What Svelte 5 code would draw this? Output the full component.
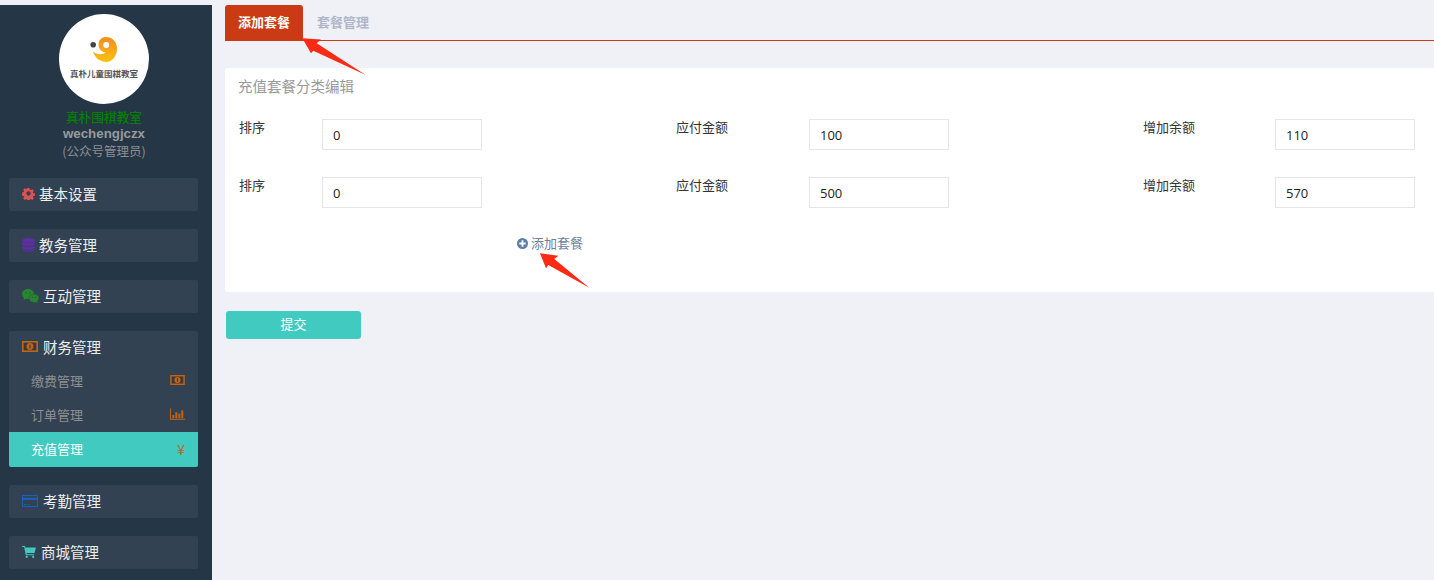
<script>
  const rows = [
    { sort: '0', pay: '100', gain: '110' },
    { sort: '0', pay: '500', gain: '570' }
  ];
</script>

<div class="page">
  <aside class="sidebar">
    <div class="profile">
      <div class="logo">
        <svg class="logo-mark" viewBox="0 0 28 25" width="28" height="25">
          <defs>
            <linearGradient id="smile" x1="0" y1="0" x2="0" y2="1">
              <stop offset="0" stop-color="#f08f1c" />
              <stop offset="1" stop-color="#fcc00f" />
            </linearGradient>
          </defs>
          <circle cx="3.200" cy="7.800" r="2.800" fill="#444" />
          <path d="M3 14.500C5 21.500 11 25 16 25c6.500 0 11-6 11-13.500C27 4.500 22 0 16 0c-4.500 0-7.500 3.300-7.500 7.500S11.500 15.500 16 15.500c-4.500 2.500-9 2.500-13-1z" fill="url(#smile)" />
          <circle cx="16.200" cy="8" r="3" fill="#fff" />
        </svg>
        <span class="logo-text">真朴儿童围棋教室</span>
      </div>
      <div class="school">真朴围棋教室</div>
      <div class="account">wechengjczx</div>
      <div class="role">(公众号管理员)</div>
    </div>

    <nav class="menu">
      <div class="group">
        <div class="head">
          <svg class="ico" viewBox="0 0 14 14" width="13" height="13">
            <path d="M5.600 0h2.800l.4 2 1.400.6 1.700-1.100 2 2-1.100 1.700.6 1.400 2 .4v2.800l-2 .4-.6 1.400 1.100 1.700-2 2-1.700-1.100-1.400.6-.4 2H5.600l-.4-2-1.400-.6-1.700 1.100-2-2 1.100-1.700-.6-1.400-2-.4V5.600l2-.4.6-1.400-1.100-1.700 2-2 1.700 1.100 1.400-.6z" fill="#d9534f" transform="translate(1.200 1.200) scale(.83)" />
            <circle cx="7" cy="7" r="2.300" fill="#324252" />
          </svg>
          基本设置
        </div>
      </div>
      <div class="group">
        <div class="head">
          <svg class="ico" viewBox="0 0 14 15" width="13" height="14">
            <ellipse cx="7" cy="2.600" rx="6.800" ry="2.600" fill="#5f2ea6" />
            <path d="M.2 3.800c1.500 2.800 12 2.800 13.600 0v3c-1.500 2.800-12 2.800-13.600 0zM.2 7.800c1.500 2.800 12 2.800 13.600 0v2.800c-1.500 2.800-12 2.800-13.600 0zM.2 11.500c1.500 2.800 12 2.800 13.600 0v.9c-1.500 3.400-12 3.400-13.600 0z" fill="#5f2ea6" />
          </svg>
          教务管理
        </div>
      </div>
      <div class="group">
        <div class="head wide">
          <svg class="ico" viewBox="0 0 17 14" width="17" height="14">
            <ellipse cx="6" cy="5" rx="6" ry="5" fill="#25882c" />
            <path d="M2 8l-.5 3 3-1.500z" fill="#25882c" />
            <ellipse cx="12" cy="9.200" rx="5" ry="4.200" fill="#25882c" stroke="#324252" stroke-width=".5" />
            <path d="M15 12l.8 2-2.500-1z" fill="#25882c" />
            <circle cx="4" cy="3.800" r=".7" fill="#324252" />
            <circle cx="8" cy="3.800" r=".7" fill="#324252" />
            <circle cx="10.300" cy="8.200" r=".6" fill="#324252" />
            <circle cx="13.700" cy="8.200" r=".6" fill="#324252" />
          </svg>
          互动管理
        </div>
      </div>
      <div class="group">
        <div class="head">
          <svg class="ico money" viewBox="0 0 16 11" width="16" height="11">
            <rect width="16" height="11" fill="#c0651a" />
            <rect x="1.600" y="1.600" width="12.800" height="7.800" fill="#3a3a3a" />
            <circle cx="8" cy="5.500" r="3.400" fill="#c0651a" />
            <rect x="7.400" y="3.600" width="1.200" height="3.800" fill="#3a3a3a" />
          </svg>
          财务管理
        </div>
        <div class="sub">
          <span>缴费管理</span>
          <svg viewBox="0 0 16 11" width="15" height="10">
            <rect width="16" height="11" fill="#c0651a" />
            <rect x="1.600" y="1.600" width="12.800" height="7.800" fill="#3a3a3a" />
            <circle cx="8" cy="5.500" r="3.400" fill="#c0651a" />
            <rect x="7.400" y="3.600" width="1.200" height="3.800" fill="#3a3a3a" />
          </svg>
        </div>
        <div class="sub">
          <span>订单管理</span>
          <svg viewBox="0 0 16 12" width="15" height="12">
            <path d="M0 0h1v11h15v1H0z" fill="#c0651a" />
            <path d="M2.500 7h2v3.500h-2zM5.700 4h2v6.500h-2zM8.900 5.500h2v5h-2zM12.100 2h2v8.500h-2z" fill="#c0651a" />
          </svg>
        </div>
        <div class="sub active">
          <span>充值管理</span>
          <span class="yen">¥</span>
        </div>
      </div>
      <div class="group">
        <div class="head">
          <svg class="ico money" viewBox="0 0 16 12" width="16" height="12">
            <path d="M1 0h14a1 1 0 0 1 1 1v10a1 1 0 0 1-1 1H1a1 1 0 0 1-1-1V1a1 1 0 0 1 1-1zM1 5v6h14V5zM1 1v1.700h14V1zM2 9h3v.8H2zM6 9h2v.8H6z" fill="#1a62b8" fill-rule="evenodd" />
          </svg>
          考勤管理
        </div>
      </div>
      <div class="group">
        <div class="head">
          <svg class="ico cart" viewBox="0 0 15 13" width="14" height="12">
            <path d="M0 0h3l.5 1.500H15l-1.500 6H4.800l.3 1.500H13v1H4L2.300 1H0z" fill="#41cbc0" />
            <circle cx="5" cy="11.800" r="1.200" fill="#41cbc0" />
            <circle cx="12" cy="11.800" r="1.200" fill="#41cbc0" />
          </svg>
          商城管理
        </div>
      </div>
    </nav>
  </aside>

  <main class="main">
    <div class="tabs">
      <div class="tab current">添加套餐</div>
      <div class="tab">套餐管理</div>
    </div>

    <section class="card">
      <h3>充值套餐分类编辑</h3>
      {#each rows as row}
        <div class="row">
          <label class="l1" for="">排序</label>
          <input class="i1" value={row.sort} />
          <label class="l2" for="">应付金额</label>
          <input class="i2" value={row.pay} />
          <label class="l3" for="">增加余额</label>
          <input class="i2" value={row.gain} />
        </div>
      {/each}
      <div class="add">
        <svg viewBox="0 0 12 12" width="11" height="11">
          <circle cx="6" cy="6" r="6" fill="#5b7ea6" />
          <path d="M5 2.500h2V5h2.500v2H7v2.500H5V7H2.500V5H5z" fill="#fff" />
        </svg>
        添加套餐
      </div>
    </section>

    <button class="submit">提交</button>
  </main>

  <svg class="marks" width="1434" height="580" viewBox="0 0 1434 580">
    <polygon points="302.300,38.300 321,39.500 316.700,43.300 365.700,75 313.300,50.700 311,53.300" fill="#fb2a14" />
    <polygon points="540,253.300 558.300,255.700 554.300,259 589.300,287.700 548.300,265 546,268.300" fill="#fb2a14" />
  </svg>
</div>

<style>
  :global(body) {
    margin: 0;
    background: #f0f1f6;
  }

  .page {
    position: relative;
    display: flex;
    height: 580px;
    overflow: hidden;
    font-family: "Noto Sans CJK SC", "Liberation Sans", sans-serif;
    background: #f0f1f6;
  }

  .sidebar {
    flex: 0 0 212px;
    margin-top: 5px;
    background: #253646;
    box-sizing: border-box;
  }

  .profile {
    display: flex;
    flex-direction: column;
    align-items: center;
    padding-top: 9px;
    margin-right: 4px;
    height: 173px;
    box-sizing: border-box;
  }

  .logo {
    display: flex;
    flex-direction: column;
    align-items: center;
    width: 90px;
    height: 90px;
    border-radius: 50%;
    background: #fff;
    box-sizing: border-box;
    padding-top: 23px;
  }

  .logo-mark {
    display: block;
    margin-left: -1px;
  }

  .logo-text {
    font-size: 8.500px;
    line-height: 10px;
    margin-top: 6px;
    font-weight: 700;
    color: #555;
    white-space: nowrap;
  }

  .school {
    margin-top: 4px;
    font-size: 12.700px;
    line-height: 18px;
    color: #008000;
    font-weight: 500;
  }

  .account {
    font-family: "Liberation Sans", sans-serif;
    font-size: 13.300px;
    font-weight: 700;
    line-height: 16px;
    color: #9a9a9a;
  }

  .role {
    font-size: 12.500px;
    line-height: 17px;
    color: #8f8f8f;
  }

  .menu {
    display: flex;
    flex-direction: column;
    gap: 18px;
    width: 189px;
    margin-left: 9px;
  }

  .group {
    background: #324252;
    border-radius: 2px;
  }

  .head {
    display: flex;
    align-items: center;
    height: 33px;
    padding: 0 0 2px 13px;
    box-sizing: border-box;
    font-size: 14.500px;
    color: #eee;
  }

  .head .ico {
    margin-right: 4px;
    flex: none;
  }

  .head.wide .ico {
    margin-right: 4px;
  }

  .head .ico.cart {
    margin-right: 5px;
  }

  .head .ico.money {
    margin-right: 5px;
  }

  .sub {
    display: flex;
    align-items: center;
    justify-content: space-between;
    height: 34px;
    padding: 0 13px 2px 22px;
    box-sizing: border-box;
    font-size: 13px;
    color: #8f8f8f;
  }

  .sub.active {
    height: 35px;
    background: #41cbc0;
    color: #fff;
    border-radius: 0 0 2px 2px;
  }

  .yen {
    font-size: 14px;
    color: #c0651a;
  }

  .main {
    flex: 1;
    min-width: 0;
    padding: 5px 0 0 13px;
  }

  .tabs {
    display: flex;
    height: 36px;
    border-bottom: 1px solid #c93a15;
    box-sizing: border-box;
  }

  .tab {
    height: 36px;
    padding: 0 14px;
    font-size: 13px;
    font-weight: 700;
    line-height: 34px;
    color: #b0b6c9;
    border-radius: 3px 3px 0 0;
    white-space: nowrap;
  }

  .tab.current {
    width: 78px;
    box-sizing: border-box;
    padding: 0;
    text-align: center;
    background: #c93a15;
    color: #fff;
  }

  .card {
    height: 224px;
    margin-top: 27px;
    padding: 8px 0 0 14px;
    box-sizing: border-box;
    background: #fff;
    border-radius: 3px 0 0 3px;
  }

  h3 {
    margin: 0 0 23px -1px;
    font-size: 14.500px;
    font-weight: 400;
    line-height: 20px;
    color: #999;
  }

  .row {
    display: flex;
    align-items: flex-start;
    height: 31px;
    margin-bottom: 27px;
  }

  label {
    font-size: 13px;
    line-height: 15px;
    color: #333;
    flex: none;
  }

  .l1 {
    width: 83px;
  }

  .l2 {
    width: 133px;
    margin-left: 194px;
  }

  .l3 {
    width: 132px;
    margin-left: 194px;
  }

  input {
    height: 31px;
    padding: 0 10px;
    box-sizing: border-box;
    border: 1px solid #e5e6e7;
    font-family: "Open Sans", "Liberation Sans", sans-serif;
    font-size: 13px;
    color: #222;
    background: #fff;
    outline: none;
    flex: none;
  }

  .i1 {
    width: 160px;
  }

  .i2 {
    width: 140px;
  }

  .add {
    display: flex;
    align-items: center;
    gap: 3px;
    margin: -1px 0 0 278px;
    font-size: 13px;
    line-height: 18px;
    color: #6d7f9c;
  }

  .submit {
    display: block;
    width: 135px;
    height: 28px;
    margin: 19px 0 0 1px;
    padding: 0 0 3px;
    border: 0;
    border-radius: 3px;
    background: #41cbc0;
    color: #fff;
    font-family: inherit;
    font-size: 13px;
  }

  .marks {
    position: absolute;
    top: 0;
    left: 0;
    pointer-events: none;
  }
</style>
